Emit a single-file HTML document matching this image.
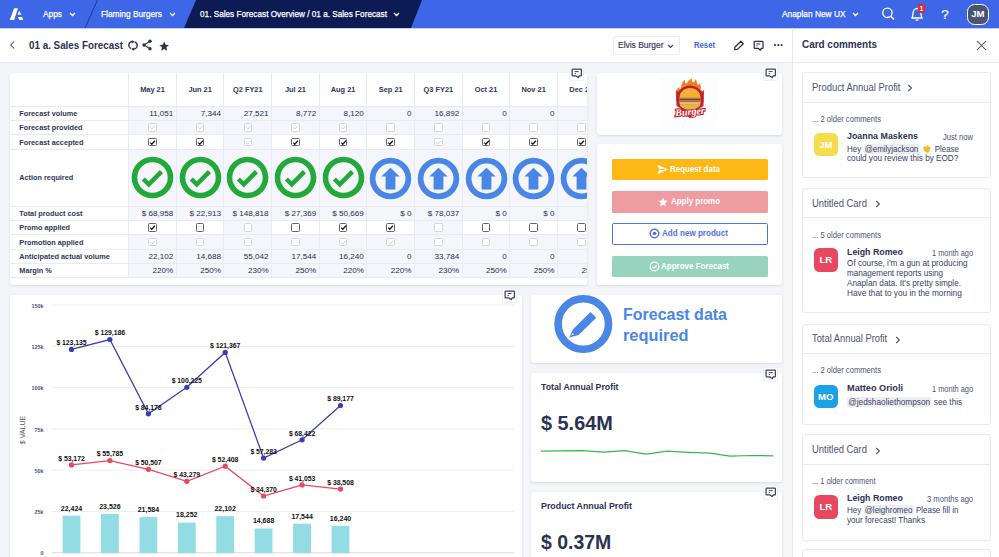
<!DOCTYPE html>
<html><head><meta charset="utf-8">
<style>
*{box-sizing:border-box;margin:0;padding:0}
html,body{width:999px;height:557px;overflow:hidden;background:#fff;font-family:"Liberation Sans",sans-serif;color:#2b3252}
.a{position:absolute}
.nw{white-space:nowrap}
.tt{position:absolute;white-space:nowrap;color:#fff;font-size:9.4px;line-height:10px;transform-origin:0 0}
.st{-webkit-text-stroke:0.25px #fff}
.card{position:absolute;background:#fff;border-radius:3px;box-shadow:0 1px 2.5px rgba(40,50,90,.12)}
.ci{position:absolute;width:15px;height:15px;background:#fff;border:1px solid #edf0f8;border-radius:2px}
.cb{position:absolute;width:8.6px;height:8.6px;border-radius:1.5px;background:#fff}
.cc{position:absolute;background:#fff;border:1px solid #e6e9f5;border-radius:3px}
</style></head><body>

<div class="a" style="left:0;top:0;width:999px;height:28px;background:#3d67e6">
<svg class="a" style="left:0;top:0" width="440" height="28" viewBox="0 0 440 28">
<polygon points="14.1,8.25 18,8.25 14.1,20.1 9.8,20.1" fill="#fff"></polygon>
<polygon points="19.1,10.8 21.5,14.7 17.6,14.7" fill="#fff"></polygon>
<polygon points="18,16.9 22.1,16.9 23.4,20.1 19.3,20.1" fill="#fff"></polygon>
<line x1="97.5" y1="0" x2="85" y2="28" stroke="#1c3590" stroke-width="0.9"></line>
<polygon points="196,0 422,0 411,28 184,28" fill="#0c1b54"></polygon>
</svg>
<div class="tt st" style="left: 43px; top: 8.5px; font-size: 9.4px; transform: scaleX(0.8889);">Apps</div>
<svg class="a" style="left:69px;top:12px" width="7" height="5" viewBox="0 0 7 5"><path d="M1 1 L3.5 3.5 L6 1" stroke="#fff" stroke-width="1.3" fill="none"></path></svg>
<div class="tt st" style="left: 100.7px; top: 8.5px; font-size: 9.4px; transform: scaleX(0.8869);">Flaming Burgers</div>
<svg class="a" style="left:169px;top:12px" width="7" height="5" viewBox="0 0 7 5"><path d="M1 1 L3.5 3.5 L6 1" stroke="#fff" stroke-width="1.3" fill="none"></path></svg>
<div class="tt st" style="left: 200px; top: 8.5px; font-size: 9.4px; transform: scaleX(0.8753);">01. Sales Forecast Overview / 01 a. Sales Forecast</div>
<svg class="a" style="left:393px;top:12px" width="7" height="5" viewBox="0 0 7 5"><path d="M1 1 L3.5 3.5 L6 1" stroke="#fff" stroke-width="1.3" fill="none"></path></svg>
<div class="tt st" style="left: 781.5px; top: 8.5px; font-size: 9.4px; transform: scaleX(0.8893);">Anaplan New UX</div>
<svg class="a" style="left:852px;top:12px" width="7" height="5" viewBox="0 0 7 5"><path d="M1 1 L3.5 3.5 L6 1" stroke="#fff" stroke-width="1.3" fill="none"></path></svg>
<svg class="a" style="left:880px;top:5px" width="16" height="17" viewBox="0 0 16 17"><circle cx="7.4" cy="7.8" r="4.7" stroke="#fff" stroke-width="1.3" fill="none"></circle><line x1="10.8" y1="11.2" x2="14" y2="14.4" stroke="#fff" stroke-width="1.4"></line></svg>
<svg class="a" style="left:910px;top:6px" width="14" height="16" viewBox="0 0 14 16"><path d="M1.8 12 C3 11 3 9.5 3 7.5 C3 4.5 4.8 2.5 7 2.5 C9.2 2.5 11 4.5 11 7.5 C11 9.5 11 11 12.2 12 Z" stroke="#fff" stroke-width="1.3" fill="none" stroke-linejoin="round"></path><path d="M5.6 13.6 Q7 15 8.4 13.6" stroke="#fff" stroke-width="1.2" fill="none"></path></svg>
<div class="a" style="left:917.8px;top:3.9px;width:7.5px;height:8.8px;background:#e0283a;border-radius:1px;color:#fff;font-size:7px;font-weight:700;line-height:9px;text-align:center">1</div>
<div class="a" style="left:941.2px;top:7.8px;color:#fff;font-size:13.5px;line-height:13px;-webkit-text-stroke:0.2px #fff">?</div>
<div class="a" style="left:967.2px;top:3.9px;width:21.4px;height:21px;border:1.8px solid #fff;border-radius:7.5px;background:#4a5573;color:#fff;font-size:9.6px;font-weight:700;line-height:18px;text-align:center;letter-spacing:-0.1px">JM</div>
</div>
<div class="a" style="left:0;top:28px;width:999px;height:1px;background:rgba(61,103,230,0.3)"></div>
<div class="a" style="left:0;top:28px;width:999px;height:35px;border-bottom:1px solid #e6e9f3"></div>
<svg class="a" style="left:9px;top:40px" width="7" height="10" viewBox="0 0 7 10"><path d="M5 1.5 L1.8 5 L5 8.5" stroke="#4a5370" stroke-width="1.1" fill="none"></path></svg>
<div class="tt" style="left: 28.8px; top: 38.5px; font-size: 11.2px; line-height: 12px; font-weight: 700; color: rgb(43, 50, 82); transform: scaleX(0.8786);">01 a. Sales Forecast</div>
<svg class="a" style="left:128px;top:40px" width="10" height="11" viewBox="0 0 10 11"><path d="M5.6 1.7 A3.6 3.6 0 0 0 3.3 8.6" stroke="#2b3252" stroke-width="1.4" fill="none"></path><path d="M4.4 8.9 A3.6 3.6 0 0 0 6.7 2" stroke="#2b3252" stroke-width="1.4" fill="none"></path><path d="M3.6 0.2 L6.6 1.7 L3.9 3.6 Z" fill="#2b3252"></path><path d="M6.4 7.4 L3.4 8.9 L6.1 10.8 Z" fill="#2b3252"></path></svg>
<svg class="a" style="left:142px;top:38.5px" width="10" height="12" viewBox="0 0 10 12"><circle cx="8" cy="2.3" r="1.7" fill="#2b3252"></circle><circle cx="2" cy="6" r="1.7" fill="#2b3252"></circle><circle cx="8" cy="9.7" r="1.7" fill="#2b3252"></circle><path d="M8 2.3 L2 6 L8 9.7" stroke="#2b3252" stroke-width="1.1" fill="none"></path></svg>
<svg class="a" style="left:158.8px;top:40.6px" width="10.4" height="10.4" viewBox="0 0 24 24"><path d="M12 1 L15.2 8.5 L23.2 9.2 L17.1 14.5 L18.9 22.5 L12 18.3 L5.1 22.5 L6.9 14.5 L0.8 9.2 L8.8 8.5 Z" fill="#2b3252"></path></svg>
<div class="a" style="left:613px;top:36px;width:67px;height:18.5px;border:1px solid #e8ebf4;border-radius:2px"></div>
<div class="tt" style="left: 617.6px; top: 39.9px; font-size: 9.6px; color: rgb(53, 61, 94); -webkit-text-stroke: 0.2px rgb(53, 61, 94); transform: scaleX(0.8798);">Elvis Burger</div>
<svg class="a" style="left:667px;top:43.5px" width="7" height="5" viewBox="0 0 7 5"><path d="M1 1 L3.5 3.5 L6 1" stroke="#3c4563" stroke-width="1.2" fill="none"></path></svg>
<div class="tt" style="left: 694.4px; top: 39.9px; font-size: 9.4px; font-weight: 700; color: rgb(61, 103, 230); transform: scaleX(0.822);">Reset</div>
<svg class="a" style="left:733px;top:40px" width="12" height="11" viewBox="0 0 12 11"><path d="M1.6 9.6 L1.9 7.2 L7.8 1.3 L10.3 3.8 L4.4 9.4 Z" stroke="#2b3252" stroke-width="1.3" fill="none" stroke-linejoin="round"></path></svg>
<svg class="a" style="left:753px;top:39.5px" width="11" height="11" viewBox="0 0 11 11"><path d="M1.8 1.3 H9.4 Q10 1.3 10 1.9 V7.7 Q10 8.3 9.4 8.3 H8.2 L7.5 10.2 L5.2 8.3 H1.8 Q1.2 8.3 1.2 7.7 V1.9 Q1.2 1.3 1.8 1.3 Z" stroke="#2b3252" stroke-width="1.25" fill="none" stroke-linejoin="round"></path><path d="M3.3 3.9 H7.2 M3.3 5.8 H4.6" stroke="#2b3252" stroke-width="1"></path></svg>
<svg class="a" style="left:772.5px;top:43.2px" width="11" height="4" viewBox="0 0 11 4"><circle cx="2" cy="2" r="1.1" fill="#2b3252"></circle><circle cx="5.3" cy="2" r="1.1" fill="#2b3252"></circle><circle cx="8.6" cy="2" r="1.1" fill="#2b3252"></circle></svg>
<div class="a" style="left:0;top:63px;width:792px;height:494px;background:#f4f5f8"></div>
<div class="a" style="left:784px;top:63px;width:8px;height:494px;background:#f7f7fa"></div>
<div class="a" style="left:792px;top:28px;width:1px;height:529px;background:#e6e9f3"></div>
<div class="card" style="left:10px;top:73px;width:577px;height:212px;overflow:hidden">
<div class="a" style="left:118.70px;top:33.20px;width:47.64px;height:14.20px;background:#f5f6fb"></div>
<div class="a" style="left:166.34px;top:33.20px;width:47.64px;height:14.20px;background:#f5f6fb"></div>
<div class="a" style="left:213.98px;top:33.20px;width:47.64px;height:14.20px;background:#f5f6fb"></div>
<div class="a" style="left:261.62px;top:33.20px;width:47.64px;height:14.20px;background:#f5f6fb"></div>
<div class="a" style="left:309.26px;top:33.20px;width:47.64px;height:14.20px;background:#f5f6fb"></div>
<div class="a" style="left:356.90px;top:33.20px;width:47.64px;height:14.20px;background:#f5f6fb"></div>
<div class="a" style="left:404.54px;top:33.20px;width:47.64px;height:14.20px;background:#f5f6fb"></div>
<div class="a" style="left:452.18px;top:33.20px;width:47.64px;height:14.20px;background:#f5f6fb"></div>
<div class="a" style="left:499.82px;top:33.20px;width:47.64px;height:14.20px;background:#f5f6fb"></div>
<div class="a" style="left:547.46px;top:33.20px;width:47.64px;height:14.20px;background:#f5f6fb"></div>
<div class="a" style="left:118.70px;top:47.40px;width:47.64px;height:14.40px;background:#f5f6fb"></div>
<div class="a" style="left:166.34px;top:47.40px;width:47.64px;height:14.40px;background:#f5f6fb"></div>
<div class="a" style="left:213.98px;top:47.40px;width:47.64px;height:14.40px;background:#f5f6fb"></div>
<div class="a" style="left:261.62px;top:47.40px;width:47.64px;height:14.40px;background:#f5f6fb"></div>
<div class="a" style="left:309.26px;top:47.40px;width:47.64px;height:14.40px;background:#f5f6fb"></div>
<div class="a" style="left:356.90px;top:47.40px;width:47.64px;height:14.40px;background:#f5f6fb"></div>
<div class="a" style="left:404.54px;top:47.40px;width:47.64px;height:14.40px;background:#f5f6fb"></div>
<div class="a" style="left:452.18px;top:47.40px;width:47.64px;height:14.40px;background:#f5f6fb"></div>
<div class="a" style="left:499.82px;top:47.40px;width:47.64px;height:14.40px;background:#f5f6fb"></div>
<div class="a" style="left:547.46px;top:47.40px;width:47.64px;height:14.40px;background:#f5f6fb"></div>
<div class="a" style="left:213.98px;top:61.80px;width:47.64px;height:14.50px;background:#f5f6fb"></div>
<div class="a" style="left:404.54px;top:61.80px;width:47.64px;height:14.50px;background:#f5f6fb"></div>
<div class="a" style="left:118.70px;top:76.30px;width:47.64px;height:56.90px;background:#f5f6fb"></div>
<div class="a" style="left:166.34px;top:76.30px;width:47.64px;height:56.90px;background:#f5f6fb"></div>
<div class="a" style="left:213.98px;top:76.30px;width:47.64px;height:56.90px;background:#f5f6fb"></div>
<div class="a" style="left:261.62px;top:76.30px;width:47.64px;height:56.90px;background:#f5f6fb"></div>
<div class="a" style="left:309.26px;top:76.30px;width:47.64px;height:56.90px;background:#f5f6fb"></div>
<div class="a" style="left:356.90px;top:76.30px;width:47.64px;height:56.90px;background:#f5f6fb"></div>
<div class="a" style="left:404.54px;top:76.30px;width:47.64px;height:56.90px;background:#f5f6fb"></div>
<div class="a" style="left:452.18px;top:76.30px;width:47.64px;height:56.90px;background:#f5f6fb"></div>
<div class="a" style="left:499.82px;top:76.30px;width:47.64px;height:56.90px;background:#f5f6fb"></div>
<div class="a" style="left:547.46px;top:76.30px;width:47.64px;height:56.90px;background:#f5f6fb"></div>
<div class="a" style="left:118.70px;top:133.20px;width:47.64px;height:14.30px;background:#f5f6fb"></div>
<div class="a" style="left:166.34px;top:133.20px;width:47.64px;height:14.30px;background:#f5f6fb"></div>
<div class="a" style="left:213.98px;top:133.20px;width:47.64px;height:14.30px;background:#f5f6fb"></div>
<div class="a" style="left:261.62px;top:133.20px;width:47.64px;height:14.30px;background:#f5f6fb"></div>
<div class="a" style="left:309.26px;top:133.20px;width:47.64px;height:14.30px;background:#f5f6fb"></div>
<div class="a" style="left:356.90px;top:133.20px;width:47.64px;height:14.30px;background:#f5f6fb"></div>
<div class="a" style="left:404.54px;top:133.20px;width:47.64px;height:14.30px;background:#f5f6fb"></div>
<div class="a" style="left:452.18px;top:133.20px;width:47.64px;height:14.30px;background:#f5f6fb"></div>
<div class="a" style="left:499.82px;top:133.20px;width:47.64px;height:14.30px;background:#f5f6fb"></div>
<div class="a" style="left:547.46px;top:133.20px;width:47.64px;height:14.30px;background:#f5f6fb"></div>
<div class="a" style="left:213.98px;top:147.50px;width:47.64px;height:14.40px;background:#f5f6fb"></div>
<div class="a" style="left:404.54px;top:147.50px;width:47.64px;height:14.40px;background:#f5f6fb"></div>
<div class="a" style="left:118.70px;top:161.90px;width:47.64px;height:14.40px;background:#f5f6fb"></div>
<div class="a" style="left:166.34px;top:161.90px;width:47.64px;height:14.40px;background:#f5f6fb"></div>
<div class="a" style="left:213.98px;top:161.90px;width:47.64px;height:14.40px;background:#f5f6fb"></div>
<div class="a" style="left:261.62px;top:161.90px;width:47.64px;height:14.40px;background:#f5f6fb"></div>
<div class="a" style="left:309.26px;top:161.90px;width:47.64px;height:14.40px;background:#f5f6fb"></div>
<div class="a" style="left:356.90px;top:161.90px;width:47.64px;height:14.40px;background:#f5f6fb"></div>
<div class="a" style="left:404.54px;top:161.90px;width:47.64px;height:14.40px;background:#f5f6fb"></div>
<div class="a" style="left:452.18px;top:161.90px;width:47.64px;height:14.40px;background:#f5f6fb"></div>
<div class="a" style="left:499.82px;top:161.90px;width:47.64px;height:14.40px;background:#f5f6fb"></div>
<div class="a" style="left:547.46px;top:161.90px;width:47.64px;height:14.40px;background:#f5f6fb"></div>
<div class="a" style="left:118.70px;top:176.30px;width:47.64px;height:14.30px;background:#f5f6fb"></div>
<div class="a" style="left:166.34px;top:176.30px;width:47.64px;height:14.30px;background:#f5f6fb"></div>
<div class="a" style="left:213.98px;top:176.30px;width:47.64px;height:14.30px;background:#f5f6fb"></div>
<div class="a" style="left:261.62px;top:176.30px;width:47.64px;height:14.30px;background:#f5f6fb"></div>
<div class="a" style="left:309.26px;top:176.30px;width:47.64px;height:14.30px;background:#f5f6fb"></div>
<div class="a" style="left:356.90px;top:176.30px;width:47.64px;height:14.30px;background:#f5f6fb"></div>
<div class="a" style="left:404.54px;top:176.30px;width:47.64px;height:14.30px;background:#f5f6fb"></div>
<div class="a" style="left:452.18px;top:176.30px;width:47.64px;height:14.30px;background:#f5f6fb"></div>
<div class="a" style="left:499.82px;top:176.30px;width:47.64px;height:14.30px;background:#f5f6fb"></div>
<div class="a" style="left:547.46px;top:176.30px;width:47.64px;height:14.30px;background:#f5f6fb"></div>
<div class="a" style="left:118.70px;top:190.60px;width:47.64px;height:14.20px;background:#f5f6fb"></div>
<div class="a" style="left:166.34px;top:190.60px;width:47.64px;height:14.20px;background:#f5f6fb"></div>
<div class="a" style="left:213.98px;top:190.60px;width:47.64px;height:14.20px;background:#f5f6fb"></div>
<div class="a" style="left:261.62px;top:190.60px;width:47.64px;height:14.20px;background:#f5f6fb"></div>
<div class="a" style="left:309.26px;top:190.60px;width:47.64px;height:14.20px;background:#f5f6fb"></div>
<div class="a" style="left:356.90px;top:190.60px;width:47.64px;height:14.20px;background:#f5f6fb"></div>
<div class="a" style="left:404.54px;top:190.60px;width:47.64px;height:14.20px;background:#f5f6fb"></div>
<div class="a" style="left:452.18px;top:190.60px;width:47.64px;height:14.20px;background:#f5f6fb"></div>
<div class="a" style="left:499.82px;top:190.60px;width:47.64px;height:14.20px;background:#f5f6fb"></div>
<div class="a" style="left:547.46px;top:190.60px;width:47.64px;height:14.20px;background:#f5f6fb"></div>
<div class="a" style="left:0;top:32.70px;width:600px;height:1px;background:#e8ebf6"></div>
<div class="a" style="left:0;top:46.90px;width:600px;height:1px;background:#e8ebf6"></div>
<div class="a" style="left:0;top:61.30px;width:600px;height:1px;background:#e8ebf6"></div>
<div class="a" style="left:0;top:75.80px;width:600px;height:1px;background:#e8ebf6"></div>
<div class="a" style="left:0;top:132.70px;width:600px;height:1px;background:#e8ebf6"></div>
<div class="a" style="left:0;top:147.00px;width:600px;height:1px;background:#e8ebf6"></div>
<div class="a" style="left:0;top:161.40px;width:600px;height:1px;background:#e8ebf6"></div>
<div class="a" style="left:0;top:175.80px;width:600px;height:1px;background:#e8ebf6"></div>
<div class="a" style="left:0;top:190.10px;width:600px;height:1px;background:#e8ebf6"></div>
<div class="a" style="left:0;top:204.30px;width:600px;height:1px;background:#e8ebf6"></div>
<div class="a" style="left:118.20px;top:0;width:1px;height:204.80px;background:#e8ebf6"></div>
<div class="a" style="left:165.84px;top:0;width:1px;height:204.80px;background:#e8ebf6"></div>
<div class="a" style="left:213.48px;top:0;width:1px;height:204.80px;background:#e8ebf6"></div>
<div class="a" style="left:261.12px;top:0;width:1px;height:204.80px;background:#e8ebf6"></div>
<div class="a" style="left:308.76px;top:0;width:1px;height:204.80px;background:#e8ebf6"></div>
<div class="a" style="left:356.40px;top:0;width:1px;height:204.80px;background:#e8ebf6"></div>
<div class="a" style="left:404.04px;top:0;width:1px;height:204.80px;background:#e8ebf6"></div>
<div class="a" style="left:451.68px;top:0;width:1px;height:204.80px;background:#e8ebf6"></div>
<div class="a" style="left:499.32px;top:0;width:1px;height:204.80px;background:#e8ebf6"></div>
<div class="a" style="left:546.96px;top:0;width:1px;height:204.80px;background:#e8ebf6"></div>
<div class="a" style="left:594.60px;top:0;width:1px;height:204.80px;background:#e8ebf6"></div>
<div class="a nw" style="left:118.70px;top:11.799999999999997px;width:47.64px;text-align:center;font-size:7.4px;font-weight:700;line-height:9px;color:#2e3658">May 21</div>
<div class="a nw" style="left:166.34px;top:11.799999999999997px;width:47.64px;text-align:center;font-size:7.4px;font-weight:700;line-height:9px;color:#2e3658">Jun 21</div>
<div class="a nw" style="left:213.98px;top:11.799999999999997px;width:47.64px;text-align:center;font-size:7.4px;font-weight:700;line-height:9px;color:#2e3658">Q2 FY21</div>
<div class="a nw" style="left:261.62px;top:11.799999999999997px;width:47.64px;text-align:center;font-size:7.4px;font-weight:700;line-height:9px;color:#2e3658">Jul 21</div>
<div class="a nw" style="left:309.26px;top:11.799999999999997px;width:47.64px;text-align:center;font-size:7.4px;font-weight:700;line-height:9px;color:#2e3658">Aug 21</div>
<div class="a nw" style="left:356.90px;top:11.799999999999997px;width:47.64px;text-align:center;font-size:7.4px;font-weight:700;line-height:9px;color:#2e3658">Sep 21</div>
<div class="a nw" style="left:404.54px;top:11.799999999999997px;width:47.64px;text-align:center;font-size:7.4px;font-weight:700;line-height:9px;color:#2e3658">Q3 FY21</div>
<div class="a nw" style="left:452.18px;top:11.799999999999997px;width:47.64px;text-align:center;font-size:7.4px;font-weight:700;line-height:9px;color:#2e3658">Oct 21</div>
<div class="a nw" style="left:499.82px;top:11.799999999999997px;width:47.64px;text-align:center;font-size:7.4px;font-weight:700;line-height:9px;color:#2e3658">Nov 21</div>
<div class="a nw" style="left:547.46px;top:11.799999999999997px;width:47.64px;text-align:center;font-size:7.4px;font-weight:700;line-height:9px;color:#2e3658">Dec 21</div>
<div class="a nw" style="left:9.3px;top:35.80px;font-size:7.3px;font-weight:700;line-height:9px;color:#2e3658">Forecast volume</div>
<div class="a nw" style="left:9.3px;top:50.10px;font-size:7.3px;font-weight:700;line-height:9px;color:#2e3658">Forecast provided</div>
<div class="a nw" style="left:9.3px;top:64.55px;font-size:7.3px;font-weight:700;line-height:9px;color:#2e3658">Forecast accepted</div>
<div class="a nw" style="left:9.3px;top:100.25px;font-size:7.3px;font-weight:700;line-height:9px;color:#2e3658">Action required</div>
<div class="a nw" style="left:9.3px;top:135.85px;font-size:7.3px;font-weight:700;line-height:9px;color:#2e3658">Total product cost</div>
<div class="a nw" style="left:9.3px;top:150.20px;font-size:7.3px;font-weight:700;line-height:9px;color:#2e3658">Promo applied</div>
<div class="a nw" style="left:9.3px;top:164.60px;font-size:7.3px;font-weight:700;line-height:9px;color:#2e3658">Promotion applied</div>
<div class="a nw" style="left:9.3px;top:178.95px;font-size:7.3px;font-weight:700;line-height:9px;color:#2e3658">Anticipated actual volume</div>
<div class="a nw" style="left:9.3px;top:193.20px;font-size:7.3px;font-weight:700;line-height:9px;color:#2e3658">Margin %</div>
<div class="a nw" style="left:118.70px;top:35.50px;width:44.64px;text-align:right;font-size:8.1px;line-height:10px;color:#272e4e">11,051</div>
<div class="a nw" style="left:166.34px;top:35.50px;width:44.64px;text-align:right;font-size:8.1px;line-height:10px;color:#272e4e">7,344</div>
<div class="a nw" style="left:213.98px;top:35.50px;width:44.64px;text-align:right;font-size:8.1px;line-height:10px;color:#272e4e">27,521</div>
<div class="a nw" style="left:261.62px;top:35.50px;width:44.64px;text-align:right;font-size:8.1px;line-height:10px;color:#272e4e">8,772</div>
<div class="a nw" style="left:309.26px;top:35.50px;width:44.64px;text-align:right;font-size:8.1px;line-height:10px;color:#272e4e">8,120</div>
<div class="a nw" style="left:356.90px;top:35.50px;width:44.64px;text-align:right;font-size:8.1px;line-height:10px;color:#272e4e">0</div>
<div class="a nw" style="left:404.54px;top:35.50px;width:44.64px;text-align:right;font-size:8.1px;line-height:10px;color:#272e4e">16,892</div>
<div class="a nw" style="left:452.18px;top:35.50px;width:44.64px;text-align:right;font-size:8.1px;line-height:10px;color:#272e4e">0</div>
<div class="a nw" style="left:499.82px;top:35.50px;width:44.64px;text-align:right;font-size:8.1px;line-height:10px;color:#272e4e">0</div>
<div class="a nw" style="left:118.70px;top:135.55px;width:44.64px;text-align:right;font-size:8.1px;line-height:10px;color:#272e4e">$ 68,958</div>
<div class="a nw" style="left:166.34px;top:135.55px;width:44.64px;text-align:right;font-size:8.1px;line-height:10px;color:#272e4e">$ 22,913</div>
<div class="a nw" style="left:213.98px;top:135.55px;width:44.64px;text-align:right;font-size:8.1px;line-height:10px;color:#272e4e">$ 148,818</div>
<div class="a nw" style="left:261.62px;top:135.55px;width:44.64px;text-align:right;font-size:8.1px;line-height:10px;color:#272e4e">$ 27,369</div>
<div class="a nw" style="left:309.26px;top:135.55px;width:44.64px;text-align:right;font-size:8.1px;line-height:10px;color:#272e4e">$ 50,669</div>
<div class="a nw" style="left:356.90px;top:135.55px;width:44.64px;text-align:right;font-size:8.1px;line-height:10px;color:#272e4e">$ 0</div>
<div class="a nw" style="left:404.54px;top:135.55px;width:44.64px;text-align:right;font-size:8.1px;line-height:10px;color:#272e4e">$ 78,037</div>
<div class="a nw" style="left:452.18px;top:135.55px;width:44.64px;text-align:right;font-size:8.1px;line-height:10px;color:#272e4e">$ 0</div>
<div class="a nw" style="left:499.82px;top:135.55px;width:44.64px;text-align:right;font-size:8.1px;line-height:10px;color:#272e4e">$ 0</div>
<div class="a nw" style="left:118.70px;top:178.65px;width:44.64px;text-align:right;font-size:8.1px;line-height:10px;color:#272e4e">22,102</div>
<div class="a nw" style="left:166.34px;top:178.65px;width:44.64px;text-align:right;font-size:8.1px;line-height:10px;color:#272e4e">14,688</div>
<div class="a nw" style="left:213.98px;top:178.65px;width:44.64px;text-align:right;font-size:8.1px;line-height:10px;color:#272e4e">55,042</div>
<div class="a nw" style="left:261.62px;top:178.65px;width:44.64px;text-align:right;font-size:8.1px;line-height:10px;color:#272e4e">17,544</div>
<div class="a nw" style="left:309.26px;top:178.65px;width:44.64px;text-align:right;font-size:8.1px;line-height:10px;color:#272e4e">16,240</div>
<div class="a nw" style="left:356.90px;top:178.65px;width:44.64px;text-align:right;font-size:8.1px;line-height:10px;color:#272e4e">0</div>
<div class="a nw" style="left:404.54px;top:178.65px;width:44.64px;text-align:right;font-size:8.1px;line-height:10px;color:#272e4e">33,784</div>
<div class="a nw" style="left:452.18px;top:178.65px;width:44.64px;text-align:right;font-size:8.1px;line-height:10px;color:#272e4e">0</div>
<div class="a nw" style="left:499.82px;top:178.65px;width:44.64px;text-align:right;font-size:8.1px;line-height:10px;color:#272e4e">0</div>
<div class="a nw" style="left:118.70px;top:192.90px;width:44.64px;text-align:right;font-size:8.1px;line-height:10px;color:#272e4e">220%</div>
<div class="a nw" style="left:166.34px;top:192.90px;width:44.64px;text-align:right;font-size:8.1px;line-height:10px;color:#272e4e">250%</div>
<div class="a nw" style="left:213.98px;top:192.90px;width:44.64px;text-align:right;font-size:8.1px;line-height:10px;color:#272e4e">230%</div>
<div class="a nw" style="left:261.62px;top:192.90px;width:44.64px;text-align:right;font-size:8.1px;line-height:10px;color:#272e4e">250%</div>
<div class="a nw" style="left:309.26px;top:192.90px;width:44.64px;text-align:right;font-size:8.1px;line-height:10px;color:#272e4e">220%</div>
<div class="a nw" style="left:356.90px;top:192.90px;width:44.64px;text-align:right;font-size:8.1px;line-height:10px;color:#272e4e">220%</div>
<div class="a nw" style="left:404.54px;top:192.90px;width:44.64px;text-align:right;font-size:8.1px;line-height:10px;color:#272e4e">230%</div>
<div class="a nw" style="left:452.18px;top:192.90px;width:44.64px;text-align:right;font-size:8.1px;line-height:10px;color:#272e4e">250%</div>
<div class="a nw" style="left:499.82px;top:192.90px;width:44.64px;text-align:right;font-size:8.1px;line-height:10px;color:#272e4e">250%</div>
<div class="a nw" style="left:547.46px;top:192.90px;width:44.64px;text-align:right;font-size:8.1px;line-height:10px;color:#272e4e">250%</div>
<div class="cb" style="left:138.22px;top:50.30px;border:1px solid #d6d6d9"></div>
<svg class="a" style="left:138.22px;top:50.30px" width="9" height="9" viewBox="0 0 9 9"><path d="M2.2 4.6 L3.8 6.2 L6.9 2.8" stroke="#c8c8cc" stroke-width="0.9" fill="none"></path></svg>
<div class="cb" style="left:185.86px;top:50.30px;border:1px solid #d6d6d9"></div>
<svg class="a" style="left:185.86px;top:50.30px" width="9" height="9" viewBox="0 0 9 9"><path d="M2.2 4.6 L3.8 6.2 L6.9 2.8" stroke="#c8c8cc" stroke-width="0.9" fill="none"></path></svg>
<div class="cb" style="left:233.50px;top:50.30px;border:1px solid #d6d6d9"></div>
<svg class="a" style="left:233.50px;top:50.30px" width="9" height="9" viewBox="0 0 9 9"><path d="M2.2 4.6 L3.8 6.2 L6.9 2.8" stroke="#c8c8cc" stroke-width="0.9" fill="none"></path></svg>
<div class="cb" style="left:281.14px;top:50.30px;border:1px solid #d6d6d9"></div>
<svg class="a" style="left:281.14px;top:50.30px" width="9" height="9" viewBox="0 0 9 9"><path d="M2.2 4.6 L3.8 6.2 L6.9 2.8" stroke="#c8c8cc" stroke-width="0.9" fill="none"></path></svg>
<div class="cb" style="left:328.78px;top:50.30px;border:1px solid #d6d6d9"></div>
<svg class="a" style="left:328.78px;top:50.30px" width="9" height="9" viewBox="0 0 9 9"><path d="M2.2 4.6 L3.8 6.2 L6.9 2.8" stroke="#c8c8cc" stroke-width="0.9" fill="none"></path></svg>
<div class="cb" style="left:376.42px;top:50.30px;border:1px solid #d6d6d9"></div>
<div class="cb" style="left:424.06px;top:50.30px;border:1px solid #d6d6d9"></div>
<div class="cb" style="left:471.70px;top:50.30px;border:1px solid #d6d6d9"></div>
<div class="cb" style="left:519.34px;top:50.30px;border:1px solid #d6d6d9"></div>
<div class="cb" style="left:566.98px;top:50.30px;border:1px solid #d6d6d9"></div>
<div class="cb" style="left:138.22px;top:64.75px;border:1px solid #666"></div>
<svg class="a" style="left:138.22px;top:64.75px" width="9" height="9" viewBox="0 0 9 9"><path d="M2.2 4.6 L3.8 6.2 L6.9 2.8" stroke="#1a1a1a" stroke-width="1.3" fill="none"></path></svg>
<div class="cb" style="left:185.86px;top:64.75px;border:1px solid #666"></div>
<svg class="a" style="left:185.86px;top:64.75px" width="9" height="9" viewBox="0 0 9 9"><path d="M2.2 4.6 L3.8 6.2 L6.9 2.8" stroke="#1a1a1a" stroke-width="1.3" fill="none"></path></svg>
<div class="cb" style="left:233.50px;top:64.75px;border:1px solid #d6d6d9"></div>
<svg class="a" style="left:233.50px;top:64.75px" width="9" height="9" viewBox="0 0 9 9"><path d="M2.2 4.6 L3.8 6.2 L6.9 2.8" stroke="#c8c8cc" stroke-width="0.9" fill="none"></path></svg>
<div class="cb" style="left:281.14px;top:64.75px;border:1px solid #666"></div>
<svg class="a" style="left:281.14px;top:64.75px" width="9" height="9" viewBox="0 0 9 9"><path d="M2.2 4.6 L3.8 6.2 L6.9 2.8" stroke="#1a1a1a" stroke-width="1.3" fill="none"></path></svg>
<div class="cb" style="left:328.78px;top:64.75px;border:1px solid #666"></div>
<svg class="a" style="left:328.78px;top:64.75px" width="9" height="9" viewBox="0 0 9 9"><path d="M2.2 4.6 L3.8 6.2 L6.9 2.8" stroke="#1a1a1a" stroke-width="1.3" fill="none"></path></svg>
<div class="cb" style="left:376.42px;top:64.75px;border:1px solid #666"></div>
<svg class="a" style="left:376.42px;top:64.75px" width="9" height="9" viewBox="0 0 9 9"><path d="M2.2 4.6 L3.8 6.2 L6.9 2.8" stroke="#1a1a1a" stroke-width="1.3" fill="none"></path></svg>
<div class="cb" style="left:424.06px;top:64.75px;border:1px solid #d6d6d9"></div>
<svg class="a" style="left:424.06px;top:64.75px" width="9" height="9" viewBox="0 0 9 9"><path d="M2.2 4.6 L3.8 6.2 L6.9 2.8" stroke="#c8c8cc" stroke-width="0.9" fill="none"></path></svg>
<div class="cb" style="left:471.70px;top:64.75px;border:1px solid #666"></div>
<svg class="a" style="left:471.70px;top:64.75px" width="9" height="9" viewBox="0 0 9 9"><path d="M2.2 4.6 L3.8 6.2 L6.9 2.8" stroke="#1a1a1a" stroke-width="1.3" fill="none"></path></svg>
<div class="cb" style="left:519.34px;top:64.75px;border:1px solid #666"></div>
<svg class="a" style="left:519.34px;top:64.75px" width="9" height="9" viewBox="0 0 9 9"><path d="M2.2 4.6 L3.8 6.2 L6.9 2.8" stroke="#1a1a1a" stroke-width="1.3" fill="none"></path></svg>
<div class="cb" style="left:566.98px;top:64.75px;border:1px solid #666"></div>
<svg class="a" style="left:566.98px;top:64.75px" width="9" height="9" viewBox="0 0 9 9"><path d="M2.2 4.6 L3.8 6.2 L6.9 2.8" stroke="#1a1a1a" stroke-width="1.3" fill="none"></path></svg>
<div class="cb" style="left:138.22px;top:150.40px;border:1px solid #666"></div>
<svg class="a" style="left:138.22px;top:150.40px" width="9" height="9" viewBox="0 0 9 9"><path d="M2.2 4.6 L3.8 6.2 L6.9 2.8" stroke="#1a1a1a" stroke-width="1.3" fill="none"></path></svg>
<div class="cb" style="left:185.86px;top:150.40px;border:1px solid #666"></div>
<div class="cb" style="left:233.50px;top:150.40px;border:1px solid #d6d6d9"></div>
<div class="cb" style="left:281.14px;top:150.40px;border:1px solid #666"></div>
<div class="cb" style="left:328.78px;top:150.40px;border:1px solid #666"></div>
<svg class="a" style="left:328.78px;top:150.40px" width="9" height="9" viewBox="0 0 9 9"><path d="M2.2 4.6 L3.8 6.2 L6.9 2.8" stroke="#1a1a1a" stroke-width="1.3" fill="none"></path></svg>
<div class="cb" style="left:376.42px;top:150.40px;border:1px solid #666"></div>
<svg class="a" style="left:376.42px;top:150.40px" width="9" height="9" viewBox="0 0 9 9"><path d="M2.2 4.6 L3.8 6.2 L6.9 2.8" stroke="#1a1a1a" stroke-width="1.3" fill="none"></path></svg>
<div class="cb" style="left:424.06px;top:150.40px;border:1px solid #d6d6d9"></div>
<div class="cb" style="left:471.70px;top:150.40px;border:1px solid #666"></div>
<div class="cb" style="left:519.34px;top:150.40px;border:1px solid #666"></div>
<div class="cb" style="left:566.98px;top:150.40px;border:1px solid #666"></div>
<div class="cb" style="left:138.22px;top:164.80px;border:1px solid #d6d6d9"></div>
<svg class="a" style="left:138.22px;top:164.80px" width="9" height="9" viewBox="0 0 9 9"><path d="M2.2 4.6 L3.8 6.2 L6.9 2.8" stroke="#c8c8cc" stroke-width="0.9" fill="none"></path></svg>
<div class="cb" style="left:185.86px;top:164.80px;border:1px solid #d6d6d9"></div>
<div class="cb" style="left:233.50px;top:164.80px;border:1px solid #d6d6d9"></div>
<div class="cb" style="left:281.14px;top:164.80px;border:1px solid #d6d6d9"></div>
<div class="cb" style="left:328.78px;top:164.80px;border:1px solid #d6d6d9"></div>
<svg class="a" style="left:328.78px;top:164.80px" width="9" height="9" viewBox="0 0 9 9"><path d="M2.2 4.6 L3.8 6.2 L6.9 2.8" stroke="#c8c8cc" stroke-width="0.9" fill="none"></path></svg>
<div class="cb" style="left:376.42px;top:164.80px;border:1px solid #d6d6d9"></div>
<svg class="a" style="left:376.42px;top:164.80px" width="9" height="9" viewBox="0 0 9 9"><path d="M2.2 4.6 L3.8 6.2 L6.9 2.8" stroke="#c8c8cc" stroke-width="0.9" fill="none"></path></svg>
<div class="cb" style="left:424.06px;top:164.80px;border:1px solid #d6d6d9"></div>
<div class="cb" style="left:471.70px;top:164.80px;border:1px solid #d6d6d9"></div>
<div class="cb" style="left:519.34px;top:164.80px;border:1px solid #d6d6d9"></div>
<div class="cb" style="left:566.98px;top:164.80px;border:1px solid #d6d6d9"></div>
<svg class="a" style="left:121.02px;top:83.30px" width="43" height="43" viewBox="0 0 43 43"><circle cx="21.5" cy="21.5" r="18" stroke="#23a93a" stroke-width="5.6" fill="none"></circle><path d="M12.3 23 L17.8 28.4 L30.4 15.6" stroke="#23a93a" stroke-width="4.4" fill="none"></path></svg>
<svg class="a" style="left:168.66px;top:83.30px" width="43" height="43" viewBox="0 0 43 43"><circle cx="21.5" cy="21.5" r="18" stroke="#23a93a" stroke-width="5.6" fill="none"></circle><path d="M12.3 23 L17.8 28.4 L30.4 15.6" stroke="#23a93a" stroke-width="4.4" fill="none"></path></svg>
<svg class="a" style="left:216.30px;top:83.30px" width="43" height="43" viewBox="0 0 43 43"><circle cx="21.5" cy="21.5" r="18" stroke="#23a93a" stroke-width="5.6" fill="none"></circle><path d="M12.3 23 L17.8 28.4 L30.4 15.6" stroke="#23a93a" stroke-width="4.4" fill="none"></path></svg>
<svg class="a" style="left:263.94px;top:83.30px" width="43" height="43" viewBox="0 0 43 43"><circle cx="21.5" cy="21.5" r="18" stroke="#23a93a" stroke-width="5.6" fill="none"></circle><path d="M12.3 23 L17.8 28.4 L30.4 15.6" stroke="#23a93a" stroke-width="4.4" fill="none"></path></svg>
<svg class="a" style="left:311.58px;top:83.30px" width="43" height="43" viewBox="0 0 43 43"><circle cx="21.5" cy="21.5" r="18" stroke="#23a93a" stroke-width="5.6" fill="none"></circle><path d="M12.3 23 L17.8 28.4 L30.4 15.6" stroke="#23a93a" stroke-width="4.4" fill="none"></path></svg>
<svg class="a" style="left:359.22px;top:84.00px" width="43" height="43" viewBox="0 0 43 43"><circle cx="21.5" cy="21.5" r="17.9" stroke="#4a86e6" stroke-width="5.8" fill="none"></circle><path d="M21.5 10.8 L30.7 19.6 L26.4 19.6 L26.4 32.4 L16.6 32.4 L16.6 19.6 L12.3 19.6 Z" fill="#4a86e6"></path></svg>
<svg class="a" style="left:406.86px;top:84.00px" width="43" height="43" viewBox="0 0 43 43"><circle cx="21.5" cy="21.5" r="17.9" stroke="#4a86e6" stroke-width="5.8" fill="none"></circle><path d="M21.5 10.8 L30.7 19.6 L26.4 19.6 L26.4 32.4 L16.6 32.4 L16.6 19.6 L12.3 19.6 Z" fill="#4a86e6"></path></svg>
<svg class="a" style="left:454.50px;top:84.00px" width="43" height="43" viewBox="0 0 43 43"><circle cx="21.5" cy="21.5" r="17.9" stroke="#4a86e6" stroke-width="5.8" fill="none"></circle><path d="M21.5 10.8 L30.7 19.6 L26.4 19.6 L26.4 32.4 L16.6 32.4 L16.6 19.6 L12.3 19.6 Z" fill="#4a86e6"></path></svg>
<svg class="a" style="left:502.14px;top:84.00px" width="43" height="43" viewBox="0 0 43 43"><circle cx="21.5" cy="21.5" r="17.9" stroke="#4a86e6" stroke-width="5.8" fill="none"></circle><path d="M21.5 10.8 L30.7 19.6 L26.4 19.6 L26.4 32.4 L16.6 32.4 L16.6 19.6 L12.3 19.6 Z" fill="#4a86e6"></path></svg>
<svg class="a" style="left:549.78px;top:84.00px" width="43" height="43" viewBox="0 0 43 43"><circle cx="21.5" cy="21.5" r="17.9" stroke="#4a86e6" stroke-width="5.8" fill="none"></circle><path d="M21.5 10.8 L30.7 19.6 L26.4 19.6 L26.4 32.4 L16.6 32.4 L16.6 19.6 L12.3 19.6 Z" fill="#4a86e6"></path></svg>
</div>
<div class="ci" style="left:568.5px;top:65.5px"></div>
<svg class="a" style="left:568.5px;top:65.5px" width="15" height="15" viewBox="0 0 15 15"><path d="M3.7 3.2 H11.8 Q12.4 3.2 12.4 3.8 V9.3 Q12.4 9.9 11.8 9.9 H10.3 L9.2 11.6 L6.9 9.9 H3.7 Q3.1 9.9 3.1 9.3 V3.8 Q3.1 3.2 3.7 3.2 Z" stroke="#3a4266" stroke-width="1.25" fill="none" stroke-linejoin="round"></path><path d="M5.7 5.6 H9.6 M5.7 7.6 H7.1" stroke="#3a4266" stroke-width="1"></path></svg>
<div class="card" style="left:597px;top:73px;width:185px;height:61.5px"></div>
<div class="a" style="left:660px;top:76.5px;width:57px;height:50px;background:#fdfdfd"></div>
<svg class="a" style="left:670px;top:76px" width="40" height="48" viewBox="0 0 40 48">
<path d="M7 22 C5 17 7 13 9 11 C9 13 10.5 13.5 11 12 C11 8 13 5 15 4 C14.5 7 16 8.5 17 7 C18 5 20 3 22 2 C21 5 22.5 7 24 6 C25 5.5 25 4 25.5 3 C27 5 27 8 28 9 C29 9 29.5 8 30 7 C31 10 31 12 30.5 14 C32 14 33 16 33 18 L33 24 L7 24 Z" fill="#f27a21"></path>
<path d="M11 15 C12 11 14 9 15.5 9 C16 11 17.5 11 18.5 9.5 C19.5 11 21.5 11 23 9 C25 10 27 12 28.5 15 Z" fill="#f9a63a"></path>
<path d="M6 14 L9.5 17 L9.5 32 L6.5 30 Z M34 14 L30.5 17 L30.5 32 L33.5 30 Z" fill="#cf2a30"></path>
<circle cx="20" cy="23" r="12.3" fill="none" stroke="#b82329" stroke-width="2.4"></circle>
<path d="M9.8 21.5 C9.8 15.5 14.5 12.5 20 12.5 C25.5 12.5 30.2 15.5 30.2 21.5 Z" fill="#f6b038"></path>
<rect x="9.5" y="21.5" width="21" height="1.4" fill="#74b649"></rect>
<rect x="9.5" y="22.9" width="21" height="1.6" fill="#8c2a26"></rect>
<rect x="9.5" y="24.5" width="21" height="2.0" fill="#e2493d"></rect>
<rect x="9.5" y="26.5" width="21" height="1.1" fill="#f4cd3c"></rect>
<rect x="9.5" y="27.6" width="21" height="1.2" fill="#74b649"></rect>
<path d="M10 28.8 H30 C30 31.5 26 33 20 33 C14 33 10 31.5 10 28.8 Z" fill="#f6b038"></path>
<path d="M16.5 39 L20 42.5 L23.5 39 Z" fill="#c7262c"></path>
<text x="20" y="39" text-anchor="middle" font-family="Liberation Serif" font-style="italic" font-weight="700" font-size="10" fill="#fff" stroke="#c7262c" stroke-width="2.2" paint-order="stroke" transform="rotate(-5 20 36)">Burger</text>
</svg>
<div class="ci" style="left:762.5px;top:65.5px"></div>
<svg class="a" style="left:762.5px;top:65.5px" width="15" height="15" viewBox="0 0 15 15"><path d="M3.7 3.2 H11.8 Q12.4 3.2 12.4 3.8 V9.3 Q12.4 9.9 11.8 9.9 H10.3 L9.2 11.6 L6.9 9.9 H3.7 Q3.1 9.9 3.1 9.3 V3.8 Q3.1 3.2 3.7 3.2 Z" stroke="#3a4266" stroke-width="1.25" fill="none" stroke-linejoin="round"></path><path d="M5.7 5.6 H9.6 M5.7 7.6 H7.1" stroke="#3a4266" stroke-width="1"></path></svg>
<div class="card" style="left:597px;top:144.4px;width:185px;height:140.6px"></div>
<div class="a" style="left:611.6px;top:159.1px;width:156.6px;height:21.4px;background:#fdb816;border-radius:1.5px"></div>
<div class="tt" style="left: 670.3px; top: 164.1px; font-size: 9.2px; font-weight: 700; color: rgb(255, 255, 255); transform: scaleX(0.8665);">Request data</div>
<svg class="a" style="left:657px;top:164.1px" width="11" height="11" viewBox="0 0 11 11"><path d="M0.8 1.2 L10.4 5.5 L0.8 9.8 L2.6 5.5 Z M2.6 5.5 H7" fill="#fff" stroke="#fff" stroke-width="0.6" stroke-linejoin="round"></path><path d="M2.4 5.5 H7.5" stroke="#fdb816" stroke-width="1"></path></svg>
<div class="a" style="left:611.6px;top:191.3px;width:156.6px;height:21.4px;background:#ef9ca1;border-radius:1.5px"></div>
<div class="tt" style="left: 670.9px; top: 196.3px; font-size: 9.2px; font-weight: 700; color: rgb(255, 255, 255); transform: scaleX(0.8649);">Apply promo</div>
<svg class="a" style="left:657.5px;top:196.8px" width="10" height="10" viewBox="0 0 24 24"><path d="M12 1 L15.2 8.5 L23.2 9.2 L17.1 14.5 L18.9 22.5 L12 18.3 L5.1 22.5 L6.9 14.5 L0.8 9.2 L8.8 8.5 Z" fill="#fff"></path></svg>
<div class="a" style="left:611.6px;top:223.2px;width:156.6px;height:21.4px;background:#fff;border:1.2px solid #4f72e3;border-radius:1.5px"></div>
<div class="tt" style="left: 662.2px; top: 228.2px; font-size: 9.2px; font-weight: 700; color: rgb(79, 114, 227); transform: scaleX(0.8796);">Add new product</div>
<svg class="a" style="left:649px;top:228.2px" width="11" height="11" viewBox="0 0 11 11"><circle cx="5.5" cy="5.5" r="4.3" stroke="#4f72e3" stroke-width="1.4" fill="none"></circle><circle cx="5.5" cy="5.5" r="1.8" fill="#4f72e3"></circle></svg>
<div class="a" style="left:611.6px;top:255.7px;width:156.6px;height:21.4px;background:#98d3bf;border-radius:1.5px"></div>
<div class="tt" style="left: 661.4px; top: 260.7px; font-size: 9.2px; font-weight: 700; color: rgb(255, 255, 255); transform: scaleX(0.8704);">Approve Forecast</div>
<svg class="a" style="left:649px;top:260.7px" width="11" height="11" viewBox="0 0 11 11"><circle cx="5.5" cy="5.5" r="4.3" stroke="#fff" stroke-width="1.3" fill="none"></circle><path d="M3.4 5.7 L4.9 7.1 L7.6 4.3" stroke="#fff" stroke-width="1.2" fill="none"></path></svg>
<div class="card" style="left:10px;top:295px;width:512px;height:280px"></div>
<div class="ci" style="left:501.5px;top:287.5px"></div>
<svg class="a" style="left:501.5px;top:287.5px" width="15" height="15" viewBox="0 0 15 15"><path d="M3.7 3.2 H11.8 Q12.4 3.2 12.4 3.8 V9.3 Q12.4 9.9 11.8 9.9 H10.3 L9.2 11.6 L6.9 9.9 H3.7 Q3.1 9.9 3.1 9.3 V3.8 Q3.1 3.2 3.7 3.2 Z" stroke="#3a4266" stroke-width="1.25" fill="none" stroke-linejoin="round"></path><path d="M5.7 5.6 H9.6 M5.7 7.6 H7.1" stroke="#3a4266" stroke-width="1"></path></svg>
<svg class="a" style="left:0;top:0" width="530" height="557" viewBox="0 0 530 557"><line x1="52" y1="305.1" x2="514.5" y2="305.1" stroke="#eceef2" stroke-width="1"></line><line x1="52" y1="346.4" x2="514.5" y2="346.4" stroke="#eceef2" stroke-width="1"></line><line x1="52" y1="387.6" x2="514.5" y2="387.6" stroke="#eceef2" stroke-width="1"></line><line x1="52" y1="428.9" x2="514.5" y2="428.9" stroke="#eceef2" stroke-width="1"></line><line x1="52" y1="470.2" x2="514.5" y2="470.2" stroke="#eceef2" stroke-width="1"></line><line x1="52" y1="511.5" x2="514.5" y2="511.5" stroke="#eceef2" stroke-width="1"></line><line x1="52" y1="552.7" x2="514.5" y2="552.7" stroke="#dfe3f1" stroke-width="1.3"></line><rect x="62.6" y="515.7" width="17.8" height="37.5" fill="#93dce4"></rect><rect x="101.0" y="513.9" width="17.8" height="39.3" fill="#93dce4"></rect><rect x="139.5" y="517.1" width="17.8" height="36.1" fill="#93dce4"></rect><rect x="177.9" y="522.6" width="17.8" height="30.6" fill="#93dce4"></rect><rect x="216.3" y="516.2" width="17.8" height="37.0" fill="#93dce4"></rect><rect x="254.7" y="528.5" width="17.8" height="24.7" fill="#93dce4"></rect><rect x="293.2" y="523.7" width="17.8" height="29.5" fill="#93dce4"></rect><rect x="331.6" y="525.9" width="17.8" height="27.3" fill="#93dce4"></rect><polyline points="71.5,464.9 109.9,460.6 148.4,469.3 186.8,481.3 225.2,466.2 263.6,496.0 302.1,484.9 340.5,489.1" stroke="#e8485f" stroke-width="1.3" fill="none"></polyline><polyline points="71.5,349.4 109.9,339.5 148.4,413.8 186.8,387.3 225.2,352.4 263.6,458.1 302.1,439.8 340.5,405.5" stroke="#3a3db8" stroke-width="1.3" fill="none"></polyline><circle cx="71.5" cy="464.9" r="2.6" fill="#e8485f"></circle><circle cx="109.9" cy="460.6" r="2.6" fill="#e8485f"></circle><circle cx="148.4" cy="469.3" r="2.6" fill="#e8485f"></circle><circle cx="186.8" cy="481.3" r="2.6" fill="#e8485f"></circle><circle cx="225.2" cy="466.2" r="2.6" fill="#e8485f"></circle><circle cx="263.6" cy="496.0" r="2.6" fill="#e8485f"></circle><circle cx="302.1" cy="484.9" r="2.6" fill="#e8485f"></circle><circle cx="340.5" cy="489.1" r="2.6" fill="#e8485f"></circle><circle cx="71.5" cy="349.4" r="2.6" fill="#3a3db8"></circle><circle cx="109.9" cy="339.5" r="2.6" fill="#3a3db8"></circle><circle cx="148.4" cy="413.8" r="2.6" fill="#3a3db8"></circle><circle cx="186.8" cy="387.3" r="2.6" fill="#3a3db8"></circle><circle cx="225.2" cy="352.4" r="2.6" fill="#3a3db8"></circle><circle cx="263.6" cy="458.1" r="2.6" fill="#3a3db8"></circle><circle cx="302.1" cy="439.8" r="2.6" fill="#3a3db8"></circle><circle cx="340.5" cy="405.5" r="2.6" fill="#3a3db8"></circle></svg>
<div class="a nw" style="left:20px;top:302.8px;width:23.6px;text-align:right;font-size:5.4px;font-weight:700;line-height:7px;color:#4b4f86">150k</div>
<div class="a nw" style="left:20px;top:344.1px;width:23.6px;text-align:right;font-size:5.4px;font-weight:700;line-height:7px;color:#4b4f86">125k</div>
<div class="a nw" style="left:20px;top:385.3px;width:23.6px;text-align:right;font-size:5.4px;font-weight:700;line-height:7px;color:#4b4f86">100k</div>
<div class="a nw" style="left:20px;top:426.6px;width:23.6px;text-align:right;font-size:5.4px;font-weight:700;line-height:7px;color:#4b4f86">75k</div>
<div class="a nw" style="left:20px;top:467.9px;width:23.6px;text-align:right;font-size:5.4px;font-weight:700;line-height:7px;color:#4b4f86">50k</div>
<div class="a nw" style="left:20px;top:509.2px;width:23.6px;text-align:right;font-size:5.4px;font-weight:700;line-height:7px;color:#4b4f86">25k</div>
<div class="a nw" style="left:20px;top:550.4px;width:23.6px;text-align:right;font-size:5.4px;font-weight:700;line-height:7px;color:#4b4f86">0</div>
<div class="a nw" style="left:8px;top:426px;width:30px;text-align:center;font-size:7px;line-height:8px;color:#555a6e;transform:rotate(-90deg)">$ VALUE</div>
<div class="a nw" style="left:46.5px;top:339.1px;width:50px;text-align:center;font-size:6.9px;font-weight:700;line-height:8px;color:#111;letter-spacing:-0.05px">$ 123,135</div>
<div class="a nw" style="left:84.9px;top:329.2px;width:50px;text-align:center;font-size:6.9px;font-weight:700;line-height:8px;color:#111;letter-spacing:-0.05px">$ 129,186</div>
<div class="a nw" style="left:123.4px;top:403.5px;width:50px;text-align:center;font-size:6.9px;font-weight:700;line-height:8px;color:#111;letter-spacing:-0.05px">$ 84,178</div>
<div class="a nw" style="left:161.8px;top:377.0px;width:50px;text-align:center;font-size:6.9px;font-weight:700;line-height:8px;color:#111;letter-spacing:-0.05px">$ 100,225</div>
<div class="a nw" style="left:200.2px;top:342.1px;width:50px;text-align:center;font-size:6.9px;font-weight:700;line-height:8px;color:#111;letter-spacing:-0.05px">$ 121,367</div>
<div class="a nw" style="left:238.6px;top:447.8px;width:50px;text-align:center;font-size:6.9px;font-weight:700;line-height:8px;color:#111;letter-spacing:-0.05px">$ 57,283</div>
<div class="a nw" style="left:277.1px;top:429.5px;width:50px;text-align:center;font-size:6.9px;font-weight:700;line-height:8px;color:#111;letter-spacing:-0.05px">$ 68,422</div>
<div class="a nw" style="left:315.5px;top:395.2px;width:50px;text-align:center;font-size:6.9px;font-weight:700;line-height:8px;color:#111;letter-spacing:-0.05px">$ 89,177</div>
<div class="a nw" style="left:46.5px;top:454.6px;width:50px;text-align:center;font-size:6.9px;font-weight:700;line-height:8px;color:#111;letter-spacing:-0.05px">$ 53,172</div>
<div class="a nw" style="left:84.9px;top:450.3px;width:50px;text-align:center;font-size:6.9px;font-weight:700;line-height:8px;color:#111;letter-spacing:-0.05px">$ 55,785</div>
<div class="a nw" style="left:123.4px;top:459.0px;width:50px;text-align:center;font-size:6.9px;font-weight:700;line-height:8px;color:#111;letter-spacing:-0.05px">$ 50,507</div>
<div class="a nw" style="left:161.8px;top:471.0px;width:50px;text-align:center;font-size:6.9px;font-weight:700;line-height:8px;color:#111;letter-spacing:-0.05px">$ 43,279</div>
<div class="a nw" style="left:200.2px;top:455.9px;width:50px;text-align:center;font-size:6.9px;font-weight:700;line-height:8px;color:#111;letter-spacing:-0.05px">$ 52,408</div>
<div class="a nw" style="left:238.6px;top:485.7px;width:50px;text-align:center;font-size:6.9px;font-weight:700;line-height:8px;color:#111;letter-spacing:-0.05px">$ 34,370</div>
<div class="a nw" style="left:277.1px;top:474.6px;width:50px;text-align:center;font-size:6.9px;font-weight:700;line-height:8px;color:#111;letter-spacing:-0.05px">$ 41,053</div>
<div class="a nw" style="left:315.5px;top:478.8px;width:50px;text-align:center;font-size:6.9px;font-weight:700;line-height:8px;color:#111;letter-spacing:-0.05px">$ 38,508</div>
<div class="a nw" style="left:46.5px;top:504.5px;width:50px;text-align:center;font-size:7px;font-weight:700;line-height:8px;color:#111">22,424</div>
<div class="a nw" style="left:84.9px;top:502.7px;width:50px;text-align:center;font-size:7px;font-weight:700;line-height:8px;color:#111">23,526</div>
<div class="a nw" style="left:123.4px;top:505.9px;width:50px;text-align:center;font-size:7px;font-weight:700;line-height:8px;color:#111">21,584</div>
<div class="a nw" style="left:161.8px;top:511.4px;width:50px;text-align:center;font-size:7px;font-weight:700;line-height:8px;color:#111">18,252</div>
<div class="a nw" style="left:200.2px;top:505.0px;width:50px;text-align:center;font-size:7px;font-weight:700;line-height:8px;color:#111">22,102</div>
<div class="a nw" style="left:238.6px;top:517.3px;width:50px;text-align:center;font-size:7px;font-weight:700;line-height:8px;color:#111">14,688</div>
<div class="a nw" style="left:277.1px;top:512.5px;width:50px;text-align:center;font-size:7px;font-weight:700;line-height:8px;color:#111">17,544</div>
<div class="a nw" style="left:315.5px;top:514.7px;width:50px;text-align:center;font-size:7px;font-weight:700;line-height:8px;color:#111">16,240</div>
<div class="card" style="left:531px;top:295px;width:251px;height:67.5px"></div>
<svg class="a" style="left:553px;top:294px" width="61" height="61" viewBox="0 0 61 61"><circle cx="30.3" cy="30" r="25.2" stroke="#4a86e6" stroke-width="7.6" fill="none"></circle><path d="M16.3 43.6 L19.8 35.4 L37.5 18 L43.3 23.8 L25.6 41 Z" fill="#4a86e6"></path><path d="M18.3 41.6 L19.3 39 L21.0 40.6 Z" fill="#fff"></path></svg>
<div class="tt" style="left: 622.5px; top: 305.2px; font-size: 15.6px; line-height: 20px; font-weight: 700; color: rgb(74, 134, 230); transform: scaleX(1.0256);">Forecast data</div>
<div class="tt" style="left: 622.5px; top: 326.1px; font-size: 15.6px; line-height: 20px; font-weight: 700; color: rgb(74, 134, 230); transform: scaleX(1.0498);">required</div>
<div class="card" style="left:531px;top:372.5px;width:251px;height:109.5px"></div>
<div class="ci" style="left:762.5px;top:366.5px"></div>
<svg class="a" style="left:762.5px;top:366.5px" width="15" height="15" viewBox="0 0 15 15"><path d="M3.7 3.2 H11.8 Q12.4 3.2 12.4 3.8 V9.3 Q12.4 9.9 11.8 9.9 H10.3 L9.2 11.6 L6.9 9.9 H3.7 Q3.1 9.9 3.1 9.3 V3.8 Q3.1 3.2 3.7 3.2 Z" stroke="#3a4266" stroke-width="1.25" fill="none" stroke-linejoin="round"></path><path d="M5.7 5.6 H9.6 M5.7 7.6 H7.1" stroke="#3a4266" stroke-width="1"></path></svg>
<div class="tt" style="left: 541.2px; top: 381.5px; font-size: 9.6px; font-weight: 700; color: rgb(43, 50, 82); transform: scaleX(0.9145);">Total Annual Profit</div>
<div class="tt" style="left: 541px; top: 411.8px; font-size: 19.4px; line-height: 22px; font-weight: 700; color: rgb(43, 50, 82); transform: scaleX(1.0246);">$ 5.64M</div>
<svg class="a" style="left:0;top:0" width="790" height="557" viewBox="0 0 790 557"><polyline points="540.7,451.1 582,450.6 604,452.2 624.7,450.6 646.2,454.2 667.4,451.1 688,452.3 710,453.2 730,456.2 751.4,455.5 773.4,455.8" stroke="#3db54a" stroke-width="1.2" fill="none"></polyline></svg>
<div class="card" style="left:531px;top:491.5px;width:251px;height:80px"></div>
<div class="ci" style="left:762.5px;top:485px"></div>
<svg class="a" style="left:762.5px;top:485px" width="15" height="15" viewBox="0 0 15 15"><path d="M3.7 3.2 H11.8 Q12.4 3.2 12.4 3.8 V9.3 Q12.4 9.9 11.8 9.9 H10.3 L9.2 11.6 L6.9 9.9 H3.7 Q3.1 9.9 3.1 9.3 V3.8 Q3.1 3.2 3.7 3.2 Z" stroke="#3a4266" stroke-width="1.25" fill="none" stroke-linejoin="round"></path><path d="M5.7 5.6 H9.6 M5.7 7.6 H7.1" stroke="#3a4266" stroke-width="1"></path></svg>
<div class="tt" style="left: 540.8px; top: 500.5px; font-size: 9.6px; font-weight: 700; color: rgb(43, 50, 82); transform: scaleX(0.9212);">Product Annual Profit</div>
<div class="tt" style="left: 540.8px; top: 530.8px; font-size: 19.4px; line-height: 22px; font-weight: 700; color: rgb(43, 50, 82); transform: scaleX(1.0032);">$ 0.37M</div>
<div class="tt" style="left: 802.4px; top: 39px; font-size: 10.4px; line-height: 12px; font-weight: 700; color: rgb(43, 50, 82); transform: scaleX(0.955);">Card comments</div>
<svg class="a" style="left:976px;top:39.5px" width="11" height="11" viewBox="0 0 11 11"><path d="M1 1 L10 10 M10 1 L1 10" stroke="#3f4868" stroke-width="1.05"></path></svg>
<div class="cc" style="left:802.4px;top:72.2px;width:188.4px;height:106.1px"></div>
<div class="a" style="left:803px;top:101.60000000000001px;width:187.4px;height:1px;background:#e6e9f5"></div>
<div class="tt" style="left: 812.3px; top: 81.7px; font-size: 10.2px; line-height: 12px; color: rgb(74, 82, 117); transform: scaleX(0.9246);">Product Annual Profit</div>
<svg class="a" style="left:907px;top:84.4px" width="6" height="8" viewBox="0 0 6 8"><path d="M1.2 1 L4.4 4 L1.2 7" stroke="#4a5275" stroke-width="1.1" fill="none"></path></svg>
<div class="tt" style="left: 812px; top: 114.7px; font-size: 8.2px; line-height: 10px; color: rgb(74, 82, 117); transform: scaleX(0.9303);">... 2 older comments</div>
<div class="a" style="left:813.8px;top:132.9px;width:24px;height:23.6px;border-radius:5.5px;background:#f5dc4b;color:#fff;font-size:9.6px;font-weight:700;line-height:23.6px;text-align:center">JM</div>
<div class="tt" style="left: 846.5px; top: 130.3px; font-size: 9.8px; line-height: 12px; font-weight: 700; color: rgb(43, 50, 82); transform: scaleX(0.9054);">Joanna Maskens</div>
<div class="tt" style="left: 943.3px; top: 133.1px; font-size: 8.2px; line-height: 10px; color: rgb(74, 82, 117); transform: scaleX(0.9284);">Just now</div>
<div class="tt" style="left: 846.5px; top: 143.9px; font-size: 9px; line-height: 10px; color: rgb(58, 65, 99); transform: scaleX(0.8838);">Hey <span style="background:#eceef2;border-radius:1.5px;padding:0 1.5px;">@emilyjackson</span> <svg width="10" height="9" viewBox="0 0 8 8" preserveAspectRatio="none" style="vertical-align:-1.5px;margin:0 1.5px 0 0.5px"><path d="M1 3.2 L2.2 1.6 L3.6 3 L4.6 0.8 L5.8 1.4 L5.9 3 L7.2 1.8 L7.6 3 L6.6 6.2 C6 7.6 4.6 8 3.4 7.4 C2 6.8 1.2 5.4 1 3.2 Z" fill="#f7b928"></path></svg> Please</div>
<div class="tt" style="left: 846.5px; top: 152.9px; font-size: 9px; line-height: 10px; color: rgb(58, 65, 99); transform: scaleX(0.9081);">could you review this by EOD?</div>
<div class="cc" style="left:802.4px;top:187.7px;width:188.4px;height:125.8px"></div>
<div class="a" style="left:803px;top:217.39999999999998px;width:187.4px;height:1px;background:#e6e9f5"></div>
<div class="tt" style="left: 812.3px; top: 197.5px; font-size: 10.2px; line-height: 12px; color: rgb(74, 82, 117); transform: scaleX(0.9249);">Untitled Card</div>
<svg class="a" style="left:874.5px;top:200.2px" width="6" height="8" viewBox="0 0 6 8"><path d="M1.2 1 L4.4 4 L1.2 7" stroke="#4a5275" stroke-width="1.1" fill="none"></path></svg>
<div class="tt" style="left: 812px; top: 230.5px; font-size: 8.2px; line-height: 10px; color: rgb(74, 82, 117); transform: scaleX(0.9303);">... 5 older comments</div>
<div class="a" style="left:813.8px;top:248.3px;width:24px;height:23.6px;border-radius:5.5px;background:#e8485f;color:#fff;font-size:9.6px;font-weight:700;line-height:23.6px;text-align:center">LR</div>
<div class="tt" style="left: 846.5px; top: 245.7px; font-size: 9.8px; line-height: 12px; font-weight: 700; color: rgb(43, 50, 82); transform: scaleX(0.8991);">Leigh Romeo</div>
<div class="tt" style="left: 932.3px; top: 248.5px; font-size: 8.2px; line-height: 10px; color: rgb(74, 82, 117); transform: scaleX(0.9005);">1 month ago</div>
<div class="tt" style="left: 846.5px; top: 258.2px; font-size: 9px; line-height: 10px; color: rgb(58, 65, 99); transform: scaleX(0.9116);">Of course, i'm a gun at producing</div>
<div class="tt" style="left: 846.5px; top: 268px; font-size: 9px; line-height: 10px; color: rgb(58, 65, 99); transform: scaleX(0.8967);">management reports using</div>
<div class="tt" style="left: 846.5px; top: 277.9px; font-size: 9px; line-height: 10px; color: rgb(58, 65, 99); transform: scaleX(0.9098);">Anaplan data. It's pretty simple.</div>
<div class="tt" style="left: 846.5px; top: 287.8px; font-size: 9px; line-height: 10px; color: rgb(58, 65, 99); transform: scaleX(0.9178);">Have that to you in the morning</div>
<div class="cc" style="left:802.4px;top:323.5px;width:188.4px;height:101.7px"></div>
<div class="a" style="left:803px;top:353.3px;width:187.4px;height:1px;background:#e6e9f5"></div>
<div class="tt" style="left: 812.3px; top: 333.4px; font-size: 10.2px; line-height: 12px; color: rgb(74, 82, 117); transform: scaleX(0.9157);">Total Annual Profit</div>
<svg class="a" style="left:894.5px;top:336.1px" width="6" height="8" viewBox="0 0 6 8"><path d="M1.2 1 L4.4 4 L1.2 7" stroke="#4a5275" stroke-width="1.1" fill="none"></path></svg>
<div class="tt" style="left: 812px; top: 366.4px; font-size: 8.2px; line-height: 10px; color: rgb(74, 82, 117); transform: scaleX(0.9303);">... 2 older comments</div>
<div class="a" style="left:813.8px;top:384.6px;width:24px;height:23.6px;border-radius:5.5px;background:#1da1e6;color:#fff;font-size:9.6px;font-weight:700;line-height:23.6px;text-align:center">MO</div>
<div class="tt" style="left: 846.5px; top: 382px; font-size: 9.8px; line-height: 12px; font-weight: 700; color: rgb(43, 50, 82); transform: scaleX(0.9353);">Matteo Orioli</div>
<div class="tt" style="left: 932.3px; top: 384.8px; font-size: 8.2px; line-height: 10px; color: rgb(74, 82, 117); transform: scaleX(0.9005);">1 month ago</div>
<div class="tt" style="left: 846.5px; top: 397.1px; font-size: 9px; line-height: 10px; color: rgb(58, 65, 99); transform: scaleX(0.9162);"><span style="background:#eceef2;border-radius:1.5px;padding:0 1.5px;">@jedshaoliethompson</span> see this</div>
<div class="cc" style="left:802.4px;top:433.8px;width:188.4px;height:106.8px"></div>
<div class="a" style="left:803px;top:463.9px;width:187.4px;height:1px;background:#e6e9f5"></div>
<div class="tt" style="left: 812.3px; top: 444px; font-size: 10.2px; line-height: 12px; color: rgb(74, 82, 117); transform: scaleX(0.9249);">Untitled Card</div>
<svg class="a" style="left:874.5px;top:446.7px" width="6" height="8" viewBox="0 0 6 8"><path d="M1.2 1 L4.4 4 L1.2 7" stroke="#4a5275" stroke-width="1.1" fill="none"></path></svg>
<div class="tt" style="left: 812px; top: 477px; font-size: 8.2px; line-height: 10px; color: rgb(74, 82, 117); transform: scaleX(0.9061);">... 1 older comment</div>
<div class="a" style="left:813.8px;top:495px;width:24px;height:23.6px;border-radius:5.5px;background:#e8485f;color:#fff;font-size:9.6px;font-weight:700;line-height:23.6px;text-align:center">LR</div>
<div class="tt" style="left: 846.5px; top: 492.4px; font-size: 9.8px; line-height: 12px; font-weight: 700; color: rgb(43, 50, 82); transform: scaleX(0.8991);">Leigh Romeo</div>
<div class="tt" style="left: 927.2px; top: 495.2px; font-size: 8.2px; line-height: 10px; color: rgb(74, 82, 117); transform: scaleX(0.929);">3 months ago</div>
<div class="tt" style="left: 846.5px; top: 504.9px; font-size: 9px; line-height: 10px; color: rgb(58, 65, 99); transform: scaleX(0.8869);">Hey <span style="background:#eceef2;border-radius:1.5px;padding:0 1.5px;">@leighromeo</span> Please fill in</div>
<div class="tt" style="left: 846.5px; top: 514.7px; font-size: 9px; line-height: 10px; color: rgb(58, 65, 99); transform: scaleX(0.903);">your forecast! Thanks</div>
<div class="cc" style="left:802.4px;top:549.2px;width:188.4px;height:40px"></div>
</body></html>
